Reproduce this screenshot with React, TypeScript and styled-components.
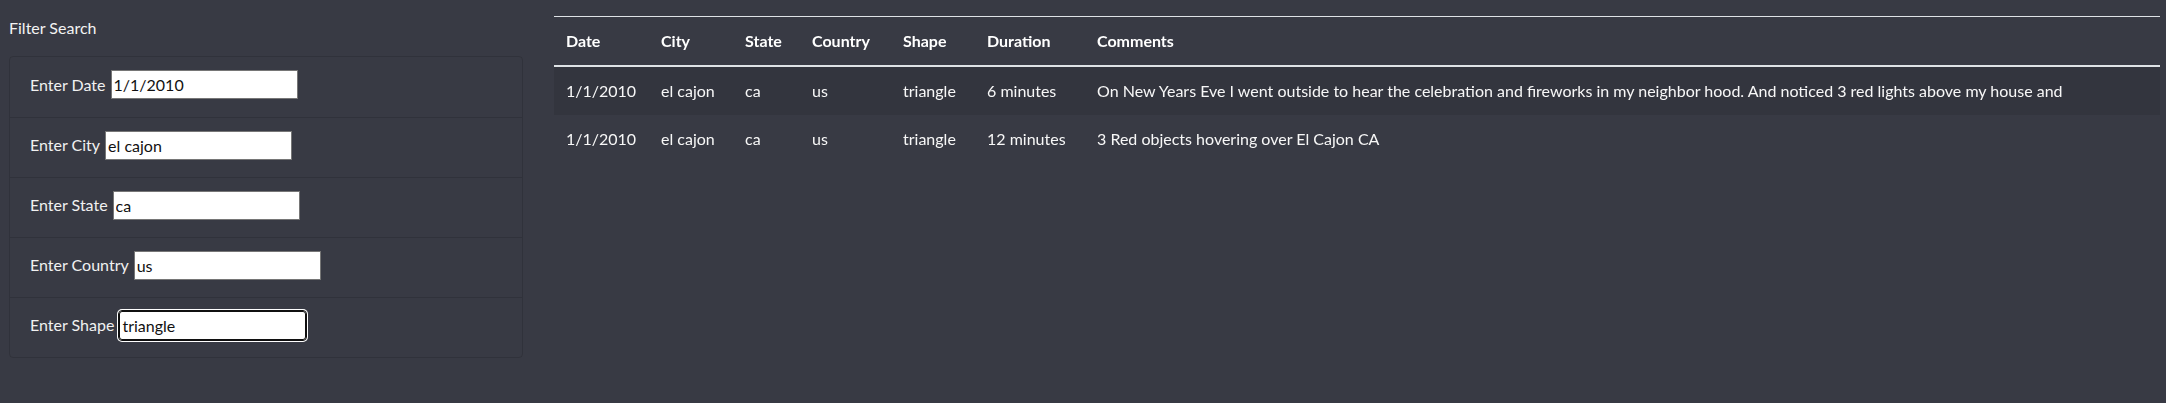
import React, { useEffect, useRef } from "react";
import styled, { createGlobalStyle } from "styled-components";

const GlobalStyle = createGlobalStyle`
  html, body {
    margin: 0;
    background: #383a44;
    font-family: Lato, "Liberation Sans", sans-serif;
    font-size: 16px;
    line-height: 1.5;
    color: #fff;
  }
  * {
    box-sizing: border-box;
  }
`;

const Page = styled.div`
  display: flex;
  align-items: flex-start;
  gap: 31px;
  min-height: 403px;
  padding: 0 6px 0 9px;
`;

const Sidebar = styled.aside`
  width: 514px;
  flex: none;
`;

const Heading = styled.div`
  margin: 16px 0 16px;
  color: #f3f3f3;
  font-size: 16px;
  line-height: 24px;
`;

const FilterList = styled.ul`
  list-style: none;
  margin: 0;
  padding: 0;
  border: 1px solid rgba(0, 0, 0, 0.13);
  border-radius: 4px;
`;

const FilterItem = styled.li`
  display: flex;
  align-items: center;
  gap: 5px;
  height: 60px;
  padding: 0 20px 5px 20px;
  & + & {
    border-top: 1px solid rgba(0, 0, 0, 0.13);
  }
`;

const Label = styled.label`
  color: #f1f1f1;
  white-space: nowrap;
`;

const TextInput = styled.input`
  width: 187px;
  height: 29px;
  padding: 1px 2px;
  border: 1px solid #767676;
  border-radius: 0;
  background: #fff;
  color: #111;
  font: inherit;
  &:focus {
    border-color: #101010;
    border-radius: 3px;
    outline: 1px solid #101010;
    box-shadow: 0 0 0 2px #fff;
  }
`;

const Results = styled.section`
  flex: 1;
  padding-top: 16px;
`;

const Table = styled.table`
  width: 100%;
  border-collapse: collapse;
  table-layout: fixed;
  color: #fff;
`;

const HeadCell = styled.th<{ $w?: number }>`
  width: ${(p) => (p.$w ? `${p.$w}px` : "auto")};
  padding: 12px;
  text-align: left;
  font-weight: 700;
  border-top: 1px solid #dee2e6;
  border-bottom: 2px solid #dee2e6;
`;

const Row = styled.tr<{ $striped?: boolean }>`
  background: ${(p) => (p.$striped ? "rgba(0, 0, 0, 0.08)" : "transparent")};
  & + & td {
    border-top: 1px solid #dee2e6;
  }
`;

const Cell = styled.td`
  padding: 12px;
  white-space: nowrap;
  color: #f7f7f7;
`;

const filters = [
  { label: "Enter Date", value: "1/1/2010" },
  { label: "Enter City", value: "el cajon" },
  { label: "Enter State", value: "ca" },
  { label: "Enter Country", value: "us" },
  { label: "Enter Shape", value: "triangle" },
];

const columns = [
  { name: "Date", w: 95 },
  { name: "City", w: 84 },
  { name: "State", w: 67 },
  { name: "Country", w: 91 },
  { name: "Shape", w: 84 },
  { name: "Duration", w: 110 },
  { name: "Comments" },
];

const sightings = [
  [
    "1/1/2010",
    "el cajon",
    "ca",
    "us",
    "triangle",
    "6 minutes",
    "On New Years Eve I went outside to hear the celebration and fireworks in my neighbor hood. And noticed 3 red lights above my house and",
  ],
  ["1/1/2010", "el cajon", "ca", "us", "triangle", "12 minutes", "3 Red objects hovering over El Cajon CA"],
];

export default function App() {
  const shapeRef = useRef<HTMLInputElement>(null);

  useEffect(() => {
    const el = shapeRef.current;
    if (el) {
      el.focus();
      el.setSelectionRange(el.value.length, el.value.length);
    }
  }, []);

  return (
    <>
      <GlobalStyle />
      <Page>
        <Sidebar>
          <Heading>Filter Search</Heading>
          <FilterList>
            {filters.map((f, i) => (
              <FilterItem key={f.label}>
                <Label htmlFor={`filter-${i}`}>{f.label}</Label>
                <TextInput
                  id={`filter-${i}`}
                  type="text"
                  defaultValue={f.value}
                  ref={i === filters.length - 1 ? shapeRef : undefined}
                />
              </FilterItem>
            ))}
          </FilterList>
        </Sidebar>
        <Results>
          <Table>
            <thead>
              <tr>
                {columns.map((c) => (
                  <HeadCell key={c.name} $w={c.w}>
                    {c.name}
                  </HeadCell>
                ))}
              </tr>
            </thead>
            <tbody>
              {sightings.map((row, i) => (
                <Row key={i} $striped={i % 2 === 0}>
                  {row.map((v, j) => (
                    <Cell key={j}>{v}</Cell>
                  ))}
                </Row>
              ))}
            </tbody>
          </Table>
        </Results>
      </Page>
    </>
  );
}
